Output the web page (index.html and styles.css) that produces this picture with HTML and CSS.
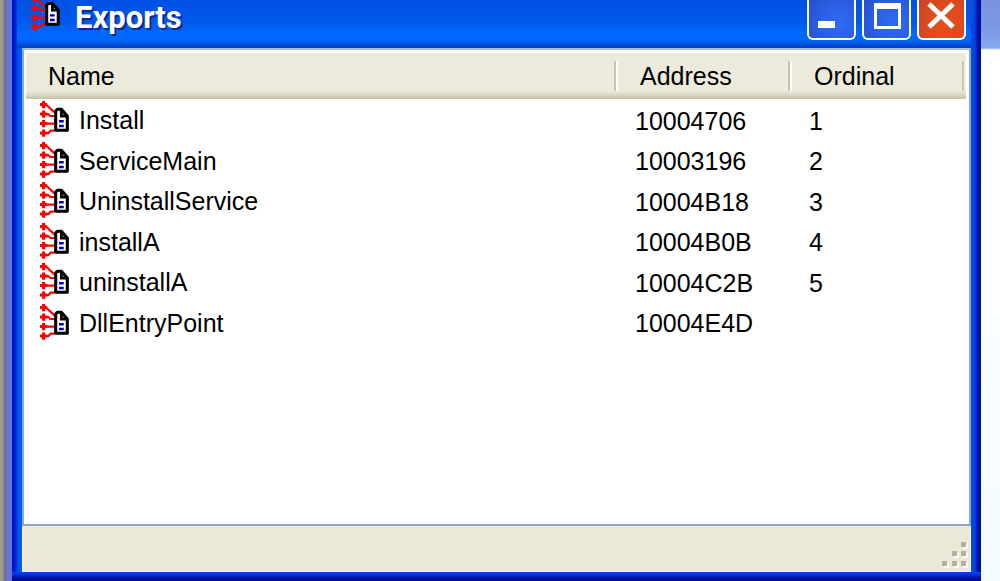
FILE: index.html
```html
<!DOCTYPE html>
<html lang="en">
<head>
<meta charset="utf-8">
<title>Exports</title>
<link rel="stylesheet" href="styles.css">
</head>
<body>
<svg class="defs" aria-hidden="true">
  <symbol id="export-icon" viewBox="0 0 16 16">
    <path fill="none" stroke="#f00" stroke-width="1.3" d="M0 1.500h3M1.500 0v3M0 5.500h3M1.500 4v3M0 9.500h3M1.500 8v3M0 13.500h3M1.500 12v3"/>
    <path fill="none" stroke="#f00" stroke-width="0.9" d="M2.500 1.500L6.200 4.900M2.500 5.500h1l.8.800H6M2.500 9.500H6M2.500 13.500h1l1-1H6"/>
    <path fill="#fff" stroke="#000" stroke-width="1.3" stroke-linejoin="round" d="M6.600 4.200L7.300 3.500H9l2.500 2.800V12.300H6.600z"/>
    <path fill="none" stroke="#000" stroke-width="1.2" d="M9 3.500V6.300h2.500"/>
    <path fill="#0000c0" d="M8 8h2v1H8zM8 10h2v1H8z"/>
  </symbol>
</svg>
<div class="desktop">
  <div class="behind-left"></div>
  <main class="window">
    <header class="titlebar">
      <svg class="title-icon" viewBox="0 2 16 14" aria-hidden="true"><use href="#export-icon" width="16" height="16"/></svg>
      <h1 class="title">Exports</h1>
      <div class="controls">
        <button class="control" aria-label="Minimize"><svg viewBox="0 0 45 38"><path fill="#fff" d="M9 21h17v7H9z"/></svg></button>
        <button class="control" aria-label="Maximize"><svg viewBox="0 0 45 38"><path fill="#fff" fill-rule="evenodd" d="M10 3h27v26H10zM13 9v17h21V9z"/></svg></button>
        <button class="control close" aria-label="Close"><svg viewBox="0 0 45 38"><path fill="none" stroke="#fff" stroke-width="5" d="M10 4l24 23M34 4L10 27"/></svg></button>
      </div>
    </header>
    <section class="list">
      <table class="exports">
        <colgroup><col><col class="col-fixed"><col class="col-fixed"></colgroup>
        <thead>
          <tr><th scope="col"><span class="head">Name</span></th><th scope="col"><span class="head">Address</span></th><th scope="col"><span class="head">Ordinal</span></th></tr>
        </thead>
        <tbody>
          <tr><td><span class="entry"><svg class="icon" aria-hidden="true"><use href="#export-icon"/></svg>Install</span></td><td>10004706</td><td>1</td></tr>
          <tr><td><span class="entry"><svg class="icon" aria-hidden="true"><use href="#export-icon"/></svg>ServiceMain</span></td><td>10003196</td><td>2</td></tr>
          <tr><td><span class="entry"><svg class="icon" aria-hidden="true"><use href="#export-icon"/></svg>UninstallService</span></td><td>10004B18</td><td>3</td></tr>
          <tr><td><span class="entry"><svg class="icon" aria-hidden="true"><use href="#export-icon"/></svg>installA</span></td><td>10004B0B</td><td>4</td></tr>
          <tr><td><span class="entry"><svg class="icon" aria-hidden="true"><use href="#export-icon"/></svg>uninstallA</span></td><td>10004C2B</td><td>5</td></tr>
          <tr><td><span class="entry"><svg class="icon" aria-hidden="true"><use href="#export-icon"/></svg>DllEntryPoint</span></td><td>10004E4D</td><td></td></tr>
        </tbody>
      </table>
    </section>
    <footer class="statusbar">
      <svg class="grip" viewBox="0 0 27 27" aria-hidden="true">
        <path fill="#fff" d="M21 3h5v5h-5zM12 12h5v5h-5zM21 12h5v5h-5zM2 22h5v5H2zM12 22h5v5h-5zM21 22h5v5h-5z"/>
        <path fill="#b5b19f" d="M19 1h5v5h-5zM10 10h5v5h-5zM19 10h5v5h-5zM0 20h5v5H0zM10 20h5v5h-5zM19 20h5v5h-5z"/>
      </svg>
    </footer>
  </main>
  <div class="behind-right"></div>
</div>
</body>
</html>
```
FILE: styles.css
```css
* { box-sizing: border-box; }

body {
  margin: 0;
  font-family: "Liberation Sans", Arial, sans-serif;
  font-size: 25px;
  line-height: 30px;
  color: #000;
}

.defs { display: none; }

.desktop {
  display: grid;
  grid-template-columns: 12px 1fr 19px;
  min-height: 100vh;
}

.behind-left {
  background: linear-gradient(90deg, #a5a292 0, #96938a 3px, #6d6b98 5px, #6c76d8 8px, #6670d4 12px);
}

.behind-right {
  background: linear-gradient(#7a93df 0, #7b98e3 28px, #84abed 48px, #fff 50px, #fcfeff 300px, #f2fbff 100%);
}

.window {
  display: flex;
  flex-direction: column;
  padding: 0 10px 9px;
  background:
    linear-gradient(#0048e8, #0030d0 3px, #0010a0 6px, #000c88) bottom / 100% 9px no-repeat,
    linear-gradient(90deg, #0014b8, #0020d0 3px, #0050e8 6px, #0060ee) left / 10px 100% no-repeat,
    linear-gradient(90deg, #0050e6, #0040dc 4px, #0010a8 7px, #000a88) right / 10px 100% no-repeat,
    #0055e5;
}

.titlebar {
  display: flex;
  align-items: flex-start;
  height: 48px;
  margin-left: -5px;
  padding: 0 5px 0 14px;
  background: linear-gradient(#0052e2, #0058ec 22px, #0068ff 33px, #0066fc 40px, #0048d0 46px, #003cb8);
}

.title-icon { width: 38px; height: 33px; }

.title {
  flex: 1;
  margin: 0;
  padding: 2px 0 0 6px;
  font: bold 31px/32px Roboto, sans-serif;
  color: #fff;
  text-shadow: 2px 2px 0 #0a2a90;
}

.controls { display: flex; gap: 6px; }

.control {
  width: 49px;
  height: 40px;
  padding: 0;
  border: 2px solid #fff;
  border-top: 0;
  border-radius: 0 0 6px 6px;
  background: radial-gradient(circle at 65% 60%, #2c6cf4, #2c5ee6 50%, #2450cc);
}

.control svg { display: block; width: 45px; height: 38px; }

.close { background: radial-gradient(circle at 60% 60%, #e4501c, #dc4a20 50%, #cc4422); }

.list {
  flex: 1;
  padding: 3px 3px 0 2px;
  border: 2px solid #8aa8c4;
  border-top-color: #a8bfd4;
  background: #fff;
}

.exports {
  width: 100%;
  table-layout: fixed;
  border-collapse: collapse;
  text-align: left;
}

.col-fixed { width: 174px; }

th {
  height: 47px;
  padding: 0;
  font-weight: normal;
  vertical-align: top;
  background: linear-gradient(#ebeadb 0, #ebeadb 38px, #dad6c4 42px, #c6c2ae 46px, #fff 46px);
}

.head {
  display: block;
  margin-top: 8px;
  padding-left: 22px;
  border-right: 2px solid #fff;
  box-shadow: inset -2px 0 #c7c5b2;
}

th:last-child .head { border-right-color: #f4f2e8; }

td {
  height: 40px;
  padding: 1px 0 0 17px;
}

tr:nth-child(even) td { height: 41px; }
td:first-child { padding: 0 0 0 14px; }

.entry { display: flex; align-items: center; gap: 1px; }
.icon { width: 38px; height: 38px; }

.statusbar {
  display: flex;
  align-items: flex-end;
  justify-content: flex-end;
  height: 46px;
  padding: 0 1px 3px;
  border: 1px solid #fff4d0;
  border-top: 0;
  background: #ece9d8;
}

.grip { width: 27px; height: 27px; }
```
